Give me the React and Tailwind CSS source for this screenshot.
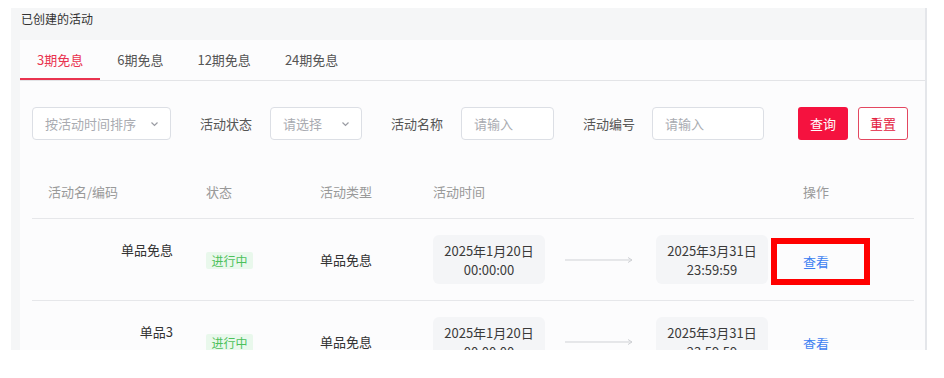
import React from "react";

const font = { fontFamily: '"Noto Sans CJK SC", "Noto Sans", sans-serif' };

function Chevron() {
  return (
    <svg width="9" height="6" viewBox="0 0 9 6" fill="none">
      <path d="M1.5 1.5 L4.5 4.5 L7.5 1.5" stroke="#9a9ca3" strokeWidth="1.2" />
    </svg>
  );
}

function Arrow() {
  return (
    <svg width="68" height="8" viewBox="0 0 68 8" fill="none">
      <line x1="0" y1="4" x2="67" y2="4" stroke="#cfd1d5" strokeWidth="1" />
      <path d="M63 1.5 L67 4 L63 6.5" stroke="#cfd1d5" strokeWidth="1" fill="none" />
    </svg>
  );
}

function DateBox({ d, t }) {
  return (
    <div className="w-[112px] h-[49px] bg-[#f4f5f7] rounded-[6px] flex flex-col items-center justify-center text-[13px] leading-[19px] text-[#3a3a3a]">
      <div>{d}</div>
      <div>{t}</div>
    </div>
  );
}

function Row({ name, highlight }) {
  return (
    <div className="flex h-[82px] border-b border-[#e6e7ea] items-center text-[13px] text-[#333]">
      <div className="w-[158px] flex flex-col items-end pr-[17px]">
        <div className="leading-[20px]">{name}</div>
        <div className="h-[20px]"></div>
      </div>
      <div className="w-[114px] pl-[16px]">
        <span className="inline-flex items-center justify-center w-[47px] h-[17px] bg-[#e9f8ec] text-[#4cc15a] text-[12px] rounded-[2px] relative top-[1px]">
          进行中
        </span>
      </div>
      <div className="w-[113px] pl-[16px]">单品免息</div>
      <div className="w-[370px] pl-[16px] flex items-center">
        <DateBox d="2025年1月20日" t="00:00:00" />
        <div className="ml-[20px] mr-[23px] flex items-center">
          <Arrow />
        </div>
        <DateBox d="2025年3月31日" t="23:59:59" />
      </div>
      <div className="w-[127px] pl-[16px] relative h-[20px] leading-[20px]">
        <span className="text-[#3d7ff2] relative top-[2px]">查看</span>
        {highlight && (
          <div className="absolute left-[-16px] top-[-12px] w-[99px] h-[47px] border-[6px] border-[#ff0000]"></div>
        )}
      </div>
    </div>
  );
}

export default function App() {
  return (
    <div className="w-[944px] h-[378px] bg-white overflow-hidden" style={font}>
      <div className="ml-[11px] mt-[8px] w-[916px] h-[342px] bg-[#f5f6f7] border-r-2 border-[#e4e6ea] overflow-hidden">
        <div className="h-[32px] pl-[10px] pt-[2px] text-[12px] leading-[18px] text-[#333]">已创建的活动</div>
        <div className="ml-[9px] bg-[#fcfcfd] h-[310px]">
          {/* tabs */}
          <div className="flex h-[41px] border-b border-[#e3e4e7] text-[13px]">
            {["3期免息", "6期免息", "12期免息", "24期免息"].map((t, i) => (
              <div
                key={t}
                className={
                  i === 0
                    ? "px-[17px] flex items-center text-[#e9334f] border-b-2 border-[#e9334f] pt-[2px]"
                    : "px-[17px] flex items-center text-[#555]"
                }
              >
                {t}
              </div>
            ))}
          </div>
          {/* filters */}
          <div className="flex items-center mt-[26px] ml-[12px] text-[13px] h-[33px]">
            <div className="w-[139px] h-[33px] border border-[#dcdfe5] rounded-[4px] flex items-center justify-between pl-[12px] pr-[11px] text-[#a9abb1] bg-white">
              <span>按活动时间排序</span>
              <Chevron />
            </div>
            <div className="ml-[29px] text-[#555]">活动状态</div>
            <div className="ml-[18px] w-[92px] h-[33px] border border-[#dcdfe5] rounded-[4px] flex items-center justify-between pl-[12px] pr-[11px] text-[#a9abb1] bg-white">
              <span>请选择</span>
              <Chevron />
            </div>
            <div className="ml-[29px] text-[#555]">活动名称</div>
            <div className="ml-[18px] w-[93px] h-[33px] border border-[#dcdfe5] rounded-[4px] flex items-center pl-[12px] text-[#a9abb1] bg-white">
              请输入
            </div>
            <div className="ml-[29px] text-[#555]">活动编号</div>
            <div className="ml-[17px] w-[112px] h-[33px] border border-[#dcdfe5] rounded-[4px] flex items-center pl-[12px] text-[#a9abb1] bg-white">
              请输入
            </div>
            <div className="ml-[34px] w-[50px] h-[33px] rounded-[3px] bg-[#f5123f] text-white flex items-center justify-center">
              查询
            </div>
            <div className="ml-[10px] w-[50px] h-[33px] rounded-[3px] border border-[#e34760] text-[#e3213f] flex items-center justify-center bg-white">
              重置
            </div>
          </div>
          {/* table */}
          <div className="ml-[12px] w-[882px] mt-[26px]">
            <div className="flex h-[53px] items-center border-b border-[#e6e7ea] text-[13px] text-[#999]">
              <div className="w-[158px] pl-[16px]">活动名/编码</div>
              <div className="w-[114px] pl-[16px]">状态</div>
              <div className="w-[113px] pl-[16px]">活动类型</div>
              <div className="w-[370px] pl-[16px]">活动时间</div>
              <div className="w-[127px] pl-[16px]">操作</div>
            </div>
            <Row name="单品免息" highlight />
            <Row name="单品3" />
          </div>
        </div>
      </div>
    </div>
  );
}
